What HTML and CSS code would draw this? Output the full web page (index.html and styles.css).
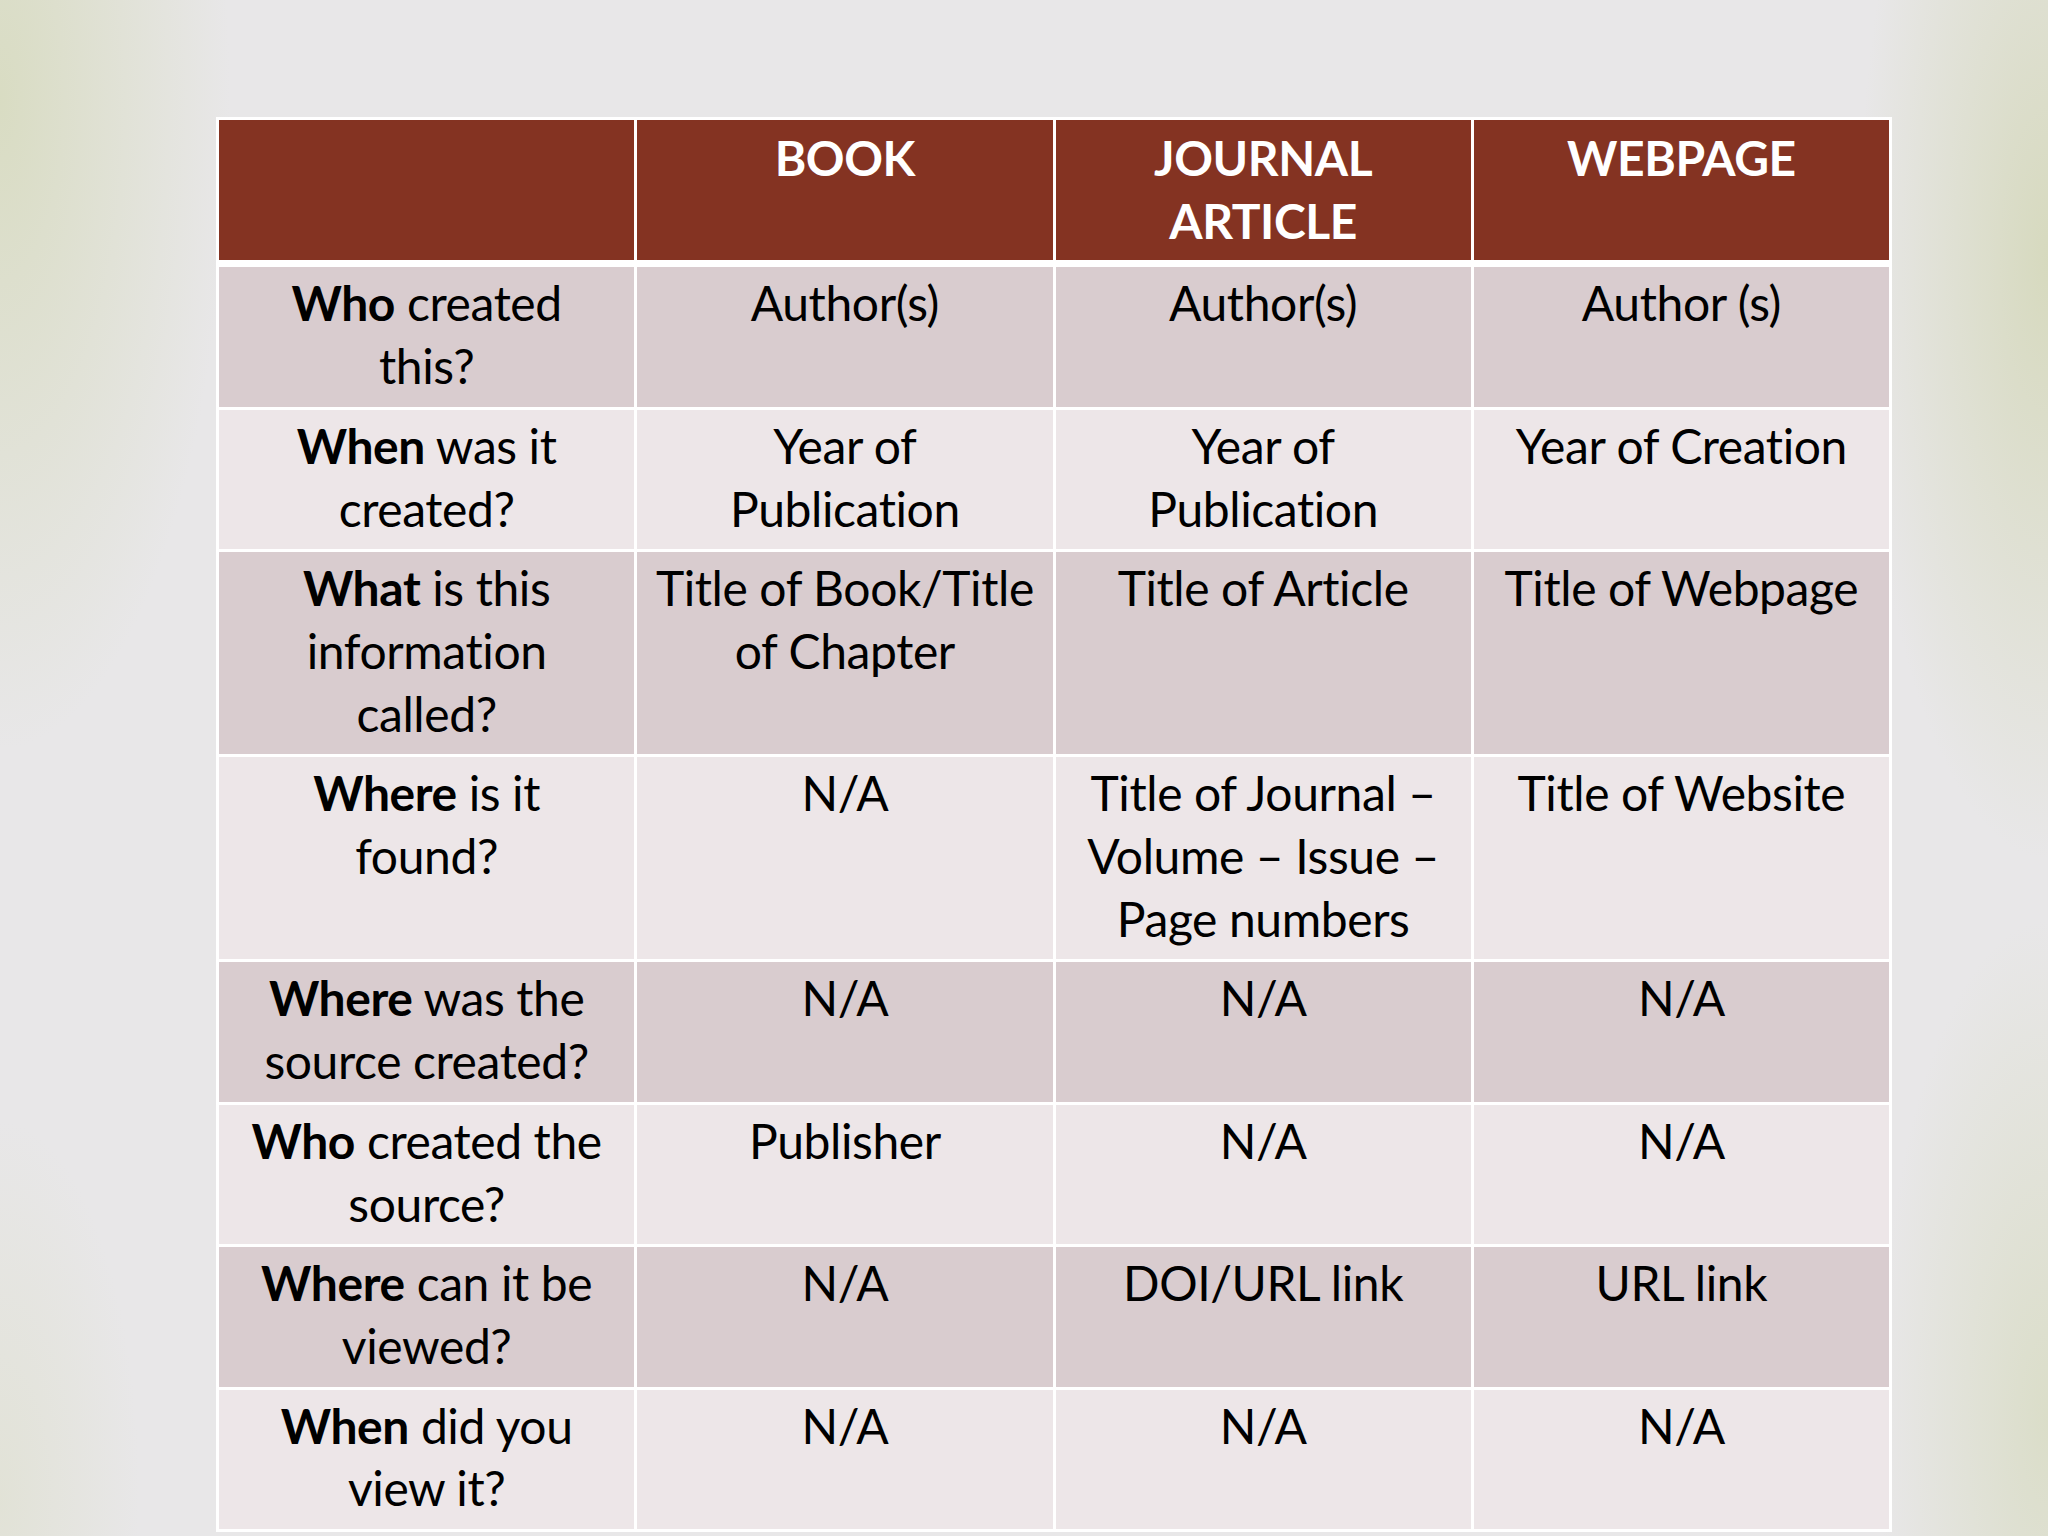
FILE: index.html
```html
<!DOCTYPE html>
<html lang="en">
<head>
<meta charset="utf-8">
<title>Citation elements</title>
<link rel="stylesheet" href="styles.css">
</head>
<body>
<div class="slide">
  <table class="grid">
    <colgroup><col><col><col><col></colgroup>
    <thead>
      <tr>
        <th></th>
        <th>BOOK</th>
        <th>JOURNAL<br>ARTICLE</th>
        <th>WEBPAGE</th>
      </tr>
    </thead>
    <tbody>
      <tr class="dark">
        <td><b>Who</b> created<br>this?</td>
        <td>Author(s)</td>
        <td>Author(s)</td>
        <td>Author (s)</td>
      </tr>
      <tr class="light">
        <td><b>When</b> was it<br>created?</td>
        <td>Year of<br>Publication</td>
        <td>Year of<br>Publication</td>
        <td>Year of Creation</td>
      </tr>
      <tr class="dark">
        <td><b>What</b> is this<br>information<br>called?</td>
        <td>Title of Book/Title<br>of Chapter</td>
        <td>Title of Article</td>
        <td>Title of Webpage</td>
      </tr>
      <tr class="light">
        <td><b>Where</b> is it<br>found?</td>
        <td>N/A</td>
        <td>Title of Journal –<br>Volume – Issue –<br>Page numbers</td>
        <td>Title of Website</td>
      </tr>
      <tr class="dark">
        <td><b>Where</b> was the<br>source created?</td>
        <td>N/A</td>
        <td>N/A</td>
        <td>N/A</td>
      </tr>
      <tr class="light">
        <td><b>Who</b> created the<br>source?</td>
        <td>Publisher</td>
        <td>N/A</td>
        <td>N/A</td>
      </tr>
      <tr class="dark">
        <td><b>Where</b> can it be<br>viewed?</td>
        <td>N/A</td>
        <td>DOI/URL link</td>
        <td>URL link</td>
      </tr>
      <tr class="light">
        <td><b>When</b> did you<br>view it?</td>
        <td>N/A</td>
        <td>N/A</td>
        <td>N/A</td>
      </tr>
    </tbody>
  </table>
</div>
</body>
</html>
```

FILE: styles.css
```css
html, body {
  margin: 0;
  padding: 0;
}

body {
  width: 2048px;
  height: 1536px;
  overflow: hidden;
  background-color: #e8e7e8;
  background-image:
    radial-gradient(ellipse 230px 650px at 0px 100px, rgba(214, 218, 188, 0.85), rgba(214, 218, 188, 0) 100%),
    radial-gradient(ellipse 190px 600px at 2048px 260px, rgba(210, 214, 180, 0.8), rgba(210, 214, 180, 0) 100%),
    radial-gradient(ellipse 170px 500px at 2048px 1420px, rgba(214, 218, 190, 0.75), rgba(214, 218, 190, 0) 100%),
    radial-gradient(ellipse 140px 380px at 0px 1500px, rgba(220, 222, 200, 0.55), rgba(220, 222, 200, 0) 100%);
  font-family: "Lato", "Open Sans", "Liberation Sans", sans-serif;
  color: #000;
}

.slide {
  padding: 117px 0 0 216px;
}

.grid {
  width: 1676px;
  table-layout: fixed;
  border-collapse: collapse;
  border: 3px solid #fff;
}

.grid col {
  width: 25%;
}

.grid th,
.grid td {
  border: 3px solid #fff;
  text-align: center;
  vertical-align: top;
  font-size: 48px;
  line-height: 62.7px;
  letter-spacing: -0.4px;
  padding: 5px 6px 9px;
}

.grid th {
  background: #843322;
  color: #fff;
  font-weight: 700;
  height: 123px;
  border-bottom: 7px solid #fff;
  padding-top: 7px;
  padding-bottom: 8px;
  box-sizing: border-box;
}

.grid b {
  font-weight: 700;
}

.dark td {
  background: #d9cccf;
}

.light td {
  background: #ede6e8;
}
```
